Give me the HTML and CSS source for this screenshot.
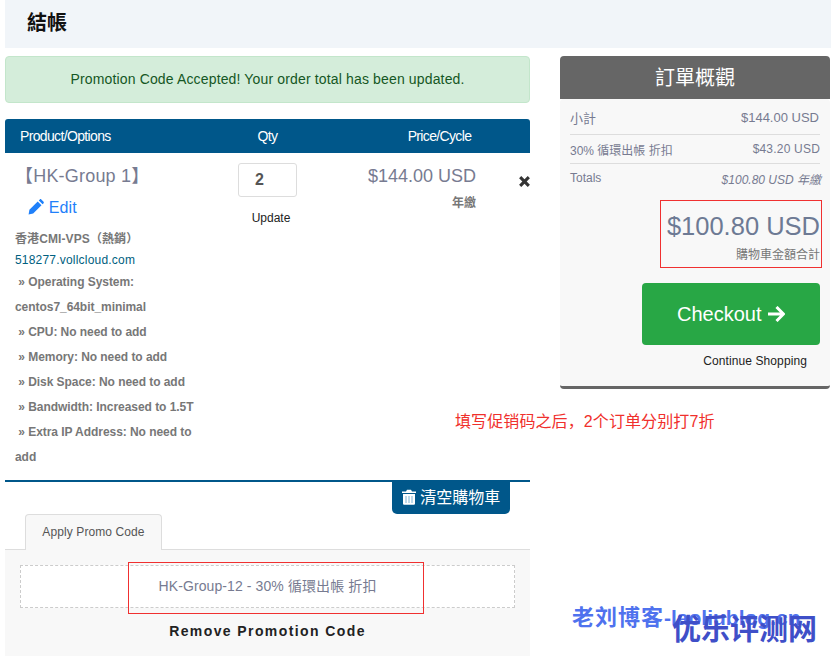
FILE: index.html
```html
<!DOCTYPE html>
<html lang="zh-Hant">
<head>
<meta charset="utf-8">
<title>結帳</title>
<link rel="stylesheet" href="styles.css">
</head>
<body>
<header class="page-head"><h1>結帳</h1></header>
<main class="layout">
  <section class="left">
    <div class="alert">Promotion Code Accepted! Your order total has been updated.</div>
    <div class="thead">
      <span class="th-prod">Product/Options</span>
      <span class="th-qty">Qty</span>
      <span class="th-price">Price/Cycle</span>
    </div>
    <div class="item">
      <div class="prod">
        <div class="prod-name">【HK-Group 1】</div>
        <a class="edit"><svg class="pencil" viewBox="0 0 16 16"><path d="M0.6 15.4l0.8-4.6 8.3-8.3 3.8 3.8-8.3 8.3zM10.8 1.4l1-1c.5-.4 1.1-.4 1.500 0l2.300 2.300c.4.4.4 1 0 1.500l-1 1z"/></svg> Edit</a>
        <div class="opts">
          <div class="opt-top">香港CMI-VPS（熱銷）</div>
          <div class="opt-domain">518277.vollcloud.com</div>
          <div class="opt first">&nbsp;» Operating System: centos7_64bit_minimal</div>
          <div class="opt">&nbsp;» CPU: No need to add</div>
          <div class="opt">&nbsp;» Memory: No need to add</div>
          <div class="opt">&nbsp;» Disk Space: No need to add</div>
          <div class="opt">&nbsp;» Bandwidth: Increased to 1.5T</div>
          <div class="opt">&nbsp;» Extra IP Address: No need to add</div>
        </div>
      </div>
      <div class="qty">
        <div class="qty-box">2</div>
        <div class="update">Update</div>
      </div>
      <div class="price">
        <div class="price-num">$144.00 USD</div>
        <div class="price-cycle">年繳</div>
      </div>
      <div class="remove"><svg class="x" viewBox="0 0 12 12"><path d="M1 3l2-2 3 3 3-3 2 2-3 3 3 3-2 2-3-3-3 3-2-2 3-3z"/></svg></div>
    </div>
    <div class="empty-row">
      <a class="empty-btn"><svg class="trash" viewBox="0 0 14 16"><path d="M0 2.500h4l1-1.800h4l1 1.800h4v1.500H0zM1 5h12v9.500c0 .8-.6 1.300-1.300 1.300H2.300c-.7 0-1.300-.5-1.300-1.300z"/><path class="trash-lines" d="M4 7v7M7 7v7M10 7v7"/></svg> 清空購物車</a>
    </div>
    <div class="tabs"><span class="tab">Apply Promo Code</span></div>
    <div class="promo">
      <div class="promo-code">HK-Group-12 - 30% 循環出帳 折扣</div>
      <div class="promo-remove">Remove Promotion Code</div>
    </div>
  </section>
  <aside class="summary">
    <h2 class="sum-head">訂單概觀</h2>
    <div class="sum-body">
      <div class="sum-row first"><span>小計</span><span>$144.00 USD</span></div>
      <div class="sum-row second"><span>30% 循環出帳 折扣</span><span class="spaced">$43.20 USD</span></div>
      <div class="sum-row totals"><span>Totals</span><em>$100.80 USD 年繳</em></div>
      <div class="sum-total">
        <div class="total-num">$100.80 USD</div>
        <div class="total-label">購物車金額合計</div>
      </div>
      <a class="checkout">Checkout <svg class="arrow" viewBox="0 0 18 16"><path d="M9.500 1l7 7-7 7M15.500 8H1"/></svg></a>
      <div class="continue">Continue Shopping</div>
    </div>
  </aside>
</main>
<div class="red-box box-total"></div>
<div class="red-box box-promo"></div>
<div class="note" lang="zh-Hans">填写促销码之后，2个订单分别打7折</div>
<div class="mark mark-a" lang="zh-Hans">老刘博客<span class="mark-latin">-laoliublog.cn</span></div>
<div class="mark mark-b" lang="zh-Hans">优乐评测网</div>
</body>
</html>
```
FILE: styles.css
```css
* { box-sizing: border-box; }
html, body { margin: 0; padding: 0; }
body {
  width: 831px;
  height: 656px;
  overflow: hidden;
  position: relative;
  background: #fff;
  font-family: "Liberation Sans", "Noto Sans CJK TC", sans-serif;
  font-size: 12px;
  color: #777;
}
.page-head {
  margin-left: 5px;
  height: 48px;
  background: #f1f5f9;
  padding: 9px 0 0 22px;
}
.page-head h1 {
  margin: 0;
  font-size: 20px;
  line-height: 28px;
  font-weight: 700;
  color: #111;
}
.layout {
  display: flex;
  padding: 8px 0 0 5px;
  gap: 30px;
}
.left { width: 525px; flex: none; }
.alert {
  height: 47px;
  background: #d4edda;
  border: 1px solid #c3e6cb;
  border-radius: 4px;
  color: #155724;
  font-size: 14px;
  line-height: 45px;
  text-align: center;
  letter-spacing: .15px;
}
.thead {
  margin-top: 16px;
  height: 34px;
  background: #00578a;
  border-radius: 3px 3px 0 0;
  color: #fff;
  font-size: 14px;
  letter-spacing: -.65px;
  line-height: 34px;
  display: flex;
}
.th-prod { width: 197px; padding-left: 15px; }
.th-qty { width: 131px; text-align: center; }
.th-price { width: 140px; padding-left: 73px; text-align: center; white-space: nowrap; }
.item {
  display: flex;
  height: 329px;
  border-bottom: 2px solid #00578a;
  position: relative;
}
.prod { width: 197px; flex: none; padding: 10px 0 0 10px; }
.prod-name { font-size: 18px; line-height: 26px; color: #777b91; letter-spacing: .2px; }
.edit {
  display: block;
  margin: 7px 0 0 13px;
  font-size: 16px;
  line-height: 24px;
  color: #1f80fa;
  letter-spacing: .2px;
}
.pencil { width: 16px; height: 16px; fill: #1f80fa; vertical-align: -2px; }
.opts { margin-top: 9px; font-weight: 700; color: #777; line-height: 25px; }
.opt-top { line-height: 20px; letter-spacing: .1px; }
.opt-domain { line-height: 22px; font-weight: 400; color: #006080; letter-spacing: .2px; }
.opt { line-height: 25px; letter-spacing: -.05px; }
.opt.first { margin-top: -1px; }
.qty { width: 131px; flex: none; padding: 10px 0 0 36px; }
.qty-box {
  width: 59px;
  height: 34px;
  border: 1px solid #ddd;
  border-radius: 3px;
  color: #555;
  font-size: 16px;
  font-weight: 700;
  line-height: 32px;
  padding-left: 16px;
}
.update { margin-top: 13px; width: 66px; color: #222; text-align: center; line-height: 16px; }
.price { width: 140px; flex: none; text-align: right; padding: 12px 0 0 0; }
.price-num { font-size: 18px; line-height: 22px; color: #777b91; width: 151px; margin-left: -8px; }
.price-cycle { font-weight: 700; line-height: 20px; margin-top: 6px; width: 151px; margin-left: -8px; }
.remove { position: absolute; left: 513px; top: 22px; line-height: 0; }
.x { width: 13px; height: 13px; fill: #333; }
.empty-row { display: flex; justify-content: flex-end; padding-right: 20px; height: 32px; }
.empty-btn {
  width: 118px;
  height: 32px;
  background: #00578a;
  border-radius: 0 0 5px 5px;
  color: #fff;
  font-size: 16px;
  line-height: 32px;
  text-align: center;
  white-space: nowrap;
}
.trash { width: 14px; height: 16px; fill: #fff; vertical-align: -2px; }
.trash-lines { fill: none; stroke: #7fb4d4; stroke-width: 1; }
.tabs {
  height: 36px;
  padding-left: 20px;
  border-bottom: 1px solid #ddd;
}
.tab {
  display: block;
  width: 137px;
  height: 36px;
  background: #f8f8f8;
  border: 1px solid #ddd;
  border-bottom: 0;
  border-radius: 4px 4px 0 0;
  color: #555;
  line-height: 34px;
  text-align: center;
  letter-spacing: .1px;
}
.promo {
  height: 106px;
  background: #f8f8f8;
  padding: 15px 15px 0;
}
.promo-code {
  height: 43px;
  border: 1px dashed #ccc;
  background: #fff;
  font-size: 14px;
  line-height: 41px;
  color: #777b91;
  text-align: center;
  letter-spacing: .1px;
}
.promo-remove {
  margin-top: 15px;
  text-align: center;
  font-size: 14px;
  font-weight: 700;
  letter-spacing: 1.4px;
  line-height: 16px;
  color: #222;
}
.summary { width: 270px; flex: none; }
.sum-head {
  margin: 0;
  height: 43px;
  background: #666;
  border-radius: 4px 4px 0 0;
  color: #fff;
  font-size: 20px;
  font-weight: 400;
  line-height: 44px;
  text-align: center;
}
.sum-body {
  height: 290px;
  background: #f8f8f8;
  border-bottom: 3px solid #666;
  border-radius: 4px;
  padding: 0 10px;
}
.sum-row {
  display: flex;
  justify-content: space-between;
  align-items: center;
  height: 29px;
  border-top: 1px solid #ddd;
  color: #777b91;
  font-size: 13px;
  padding-right: 1px;
}
.sum-row.first { border-top: 0; height: 35px; padding-top: 2px; }
.sum-row.second { font-size: 12px; padding-right: 0; }
.spaced { letter-spacing: .2px; }
.sum-row.totals { height: 27px; font-size: 12px; padding-right: 0; padding-top: 2px; }
.sum-row em { margin-right: -1px; }
.sum-total { text-align: right; padding: 21px 0 0 0; }
.total-num { font-size: 25.5px; line-height: 31px; color: #6d7a94; }
.total-label { margin-top: 5px; line-height: 16px; }
.checkout {
  display: block;
  margin: 20px 0 0 72px;
  height: 62px;
  background: #28a745;
  border-radius: 4px;
  color: #fff;
  font-size: 20px;
  line-height: 62px;
  text-align: center;
}
.arrow { width: 18px; height: 16px; fill: none; stroke: #fff; stroke-width: 3; vertical-align: -1px; }
.continue { margin: 8px 13px 0 0; text-align: right; color: #222; letter-spacing: .1px; line-height: 16px; }
.red-box { position: absolute; border: 1px solid #f03030; }
.box-total { left: 660px; top: 200px; width: 162px; height: 68px; }
.box-promo { left: 128px; top: 562px; width: 296px; height: 52px; }
.note {
  position: absolute;
  left: 455px;
  top: 412px;
  font-family: "Liberation Sans", "Noto Sans CJK SC", sans-serif;
  font-size: 16px;
  line-height: 20px;
  letter-spacing: .1px;
  color: #f0302c;
  white-space: nowrap;
}
.mark {
  position: absolute;
  white-space: nowrap;
  font-family: "Liberation Sans", "Noto Sans CJK SC", sans-serif;
  font-weight: 700;
}
.mark-a { left: 572px; top: 605px; font-size: 22px; line-height: 26px; letter-spacing: 1px; color: #4f72ee; }
.mark-latin { font-size: 21px; letter-spacing: 0; }
.mark-b { left: 672px; top: 613px; font-size: 29px; line-height: 34px; color: #3f4fc8; }
```
